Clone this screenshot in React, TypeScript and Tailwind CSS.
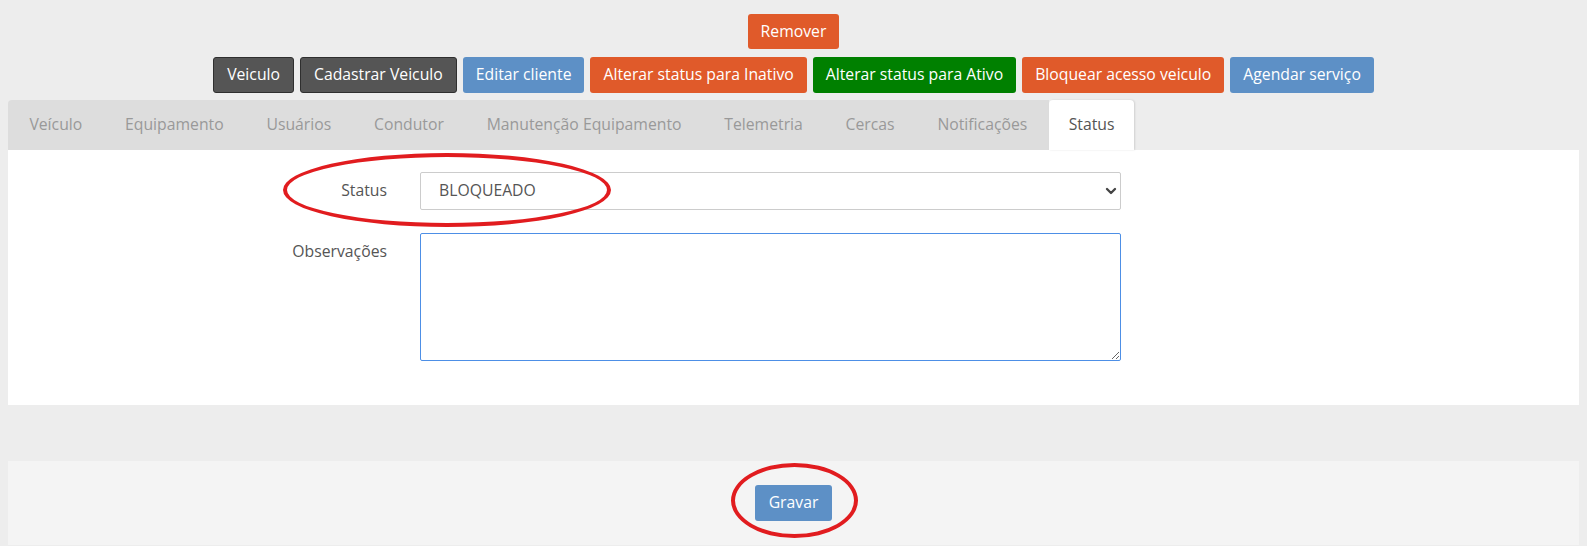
import { ChevronDown } from 'lucide-react';

const actions = [
  { label: 'Veiculo', cls: 'bg-[#555555] border border-[#2f2f2f]' },
  { label: 'Cadastrar Veiculo', cls: 'bg-[#555555] border border-[#2f2f2f]' },
  { label: 'Editar cliente', cls: 'bg-[#5d90c6]' },
  { label: 'Alterar status para Inativo', cls: 'bg-[#e05a2a]' },
  { label: 'Alterar status para Ativo', cls: 'bg-[#008000]' },
  { label: 'Bloquear acesso veiculo', cls: 'bg-[#e05a2a]' },
  { label: 'Agendar serviço', cls: 'bg-[#5d90c6]' },
];

const tabs = [
  'Veículo',
  'Equipamento',
  'Usuários',
  'Condutor',
  'Manutenção Equipamento',
  'Telemetria',
  'Cercas',
  'Notificações',
];

export default function App() {
  return (
    <div className="relative h-[546px] overflow-hidden bg-[#ededed] px-[8px] text-[15.75px] font-['Open_Sans',sans-serif] text-[#555]">
      {/* action buttons */}
      <div className="flex justify-center pt-[14px]">
        <button className="h-[35px] rounded-[3px] bg-[#e05a2a] px-[13px] text-white">Remover</button>
      </div>
      <div className="mt-[8px] flex justify-center gap-[6px]">
        {actions.map((a) => (
          <button key={a.label} className={`h-[36px] rounded-[3px] px-[13px] text-white ${a.cls}`}>
            {a.label}
          </button>
        ))}
      </div>

      {/* tabs */}
      <div className="mt-[7px] flex items-end">
        <div className="flex h-[50px] items-center rounded-tl-[4px] bg-[#dddddd]">
          {tabs.map((t) => (
            <div key={t} className="px-[21.4px] text-[#999]">
              {t}
            </div>
          ))}
        </div>
        <div className="flex h-[50px] items-center rounded-t-[4px] bg-white px-[20px] text-[#555] shadow-[1px_0_2px_rgba(0,0,0,0.12)]">
          Status
        </div>
      </div>

      {/* form panel */}
      <div className="h-[255px] bg-white pt-[22px]">
        <div className="flex items-center">
          <label className="w-[379px] shrink-0 text-right">Status</label>
          <div className="relative ml-[33px] w-[701px] shrink-0">
            <select className="h-[38px] w-full appearance-none rounded-[2px] border border-[#cccccc] bg-white pl-[18px] text-[15.75px] text-[#555] outline-none">
              <option>BLOQUEADO</option>
            </select>
            <ChevronDown className="pointer-events-none absolute right-[2px] top-[11px] h-[16px] w-[16px] text-[#444]" strokeWidth={3.5} />
          </div>
        </div>
        <div className="mt-[23px] flex items-start">
          <label className="w-[379px] shrink-0 pt-[7px] text-right">Observações</label>
          <textarea className="ml-[33px] block h-[128px] w-[701px] shrink-0 rounded-[2px] border border-[#4d8fe6] bg-white outline-none" />
        </div>
      </div>

      {/* footer */}
      <div className="mt-[56px] flex h-[84px] items-center justify-center bg-[#f4f4f4]">
        <button className="h-[36px] w-[77px] rounded-[3px] bg-[#5d90c6] text-white">Gravar</button>
      </div>

      {/* red annotation rings */}
      <div className="pointer-events-none absolute left-[283px] top-[153px] h-[74px] w-[328px] rounded-[50%] border-[4px] border-[#e11c1f]" />
      <div className="pointer-events-none absolute left-[731px] top-[463px] h-[75px] w-[127px] rounded-[50%] border-[4px] border-[#e11c1f]" />
    </div>
  );
}
